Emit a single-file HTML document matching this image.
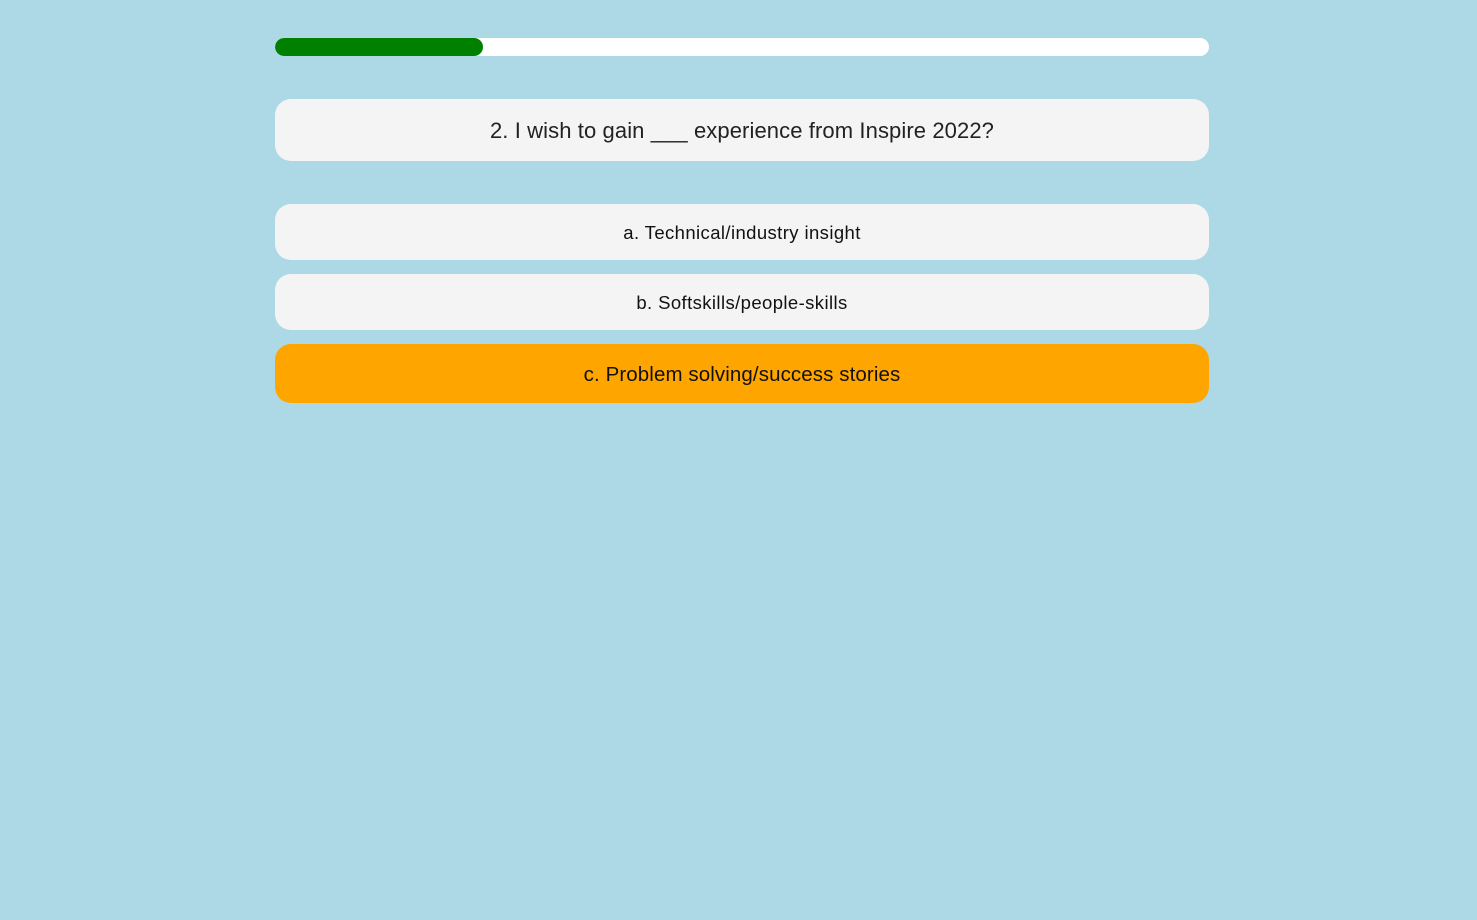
<!DOCTYPE html>
<html><head><style>
html,body{margin:0;padding:0;background:#add8e6;width:1477px;height:920px;overflow:hidden;font-family:"Liberation Sans","DejaVu Sans",sans-serif;}
.bar{position:absolute;left:275px;top:38px;width:934px;height:18px;background:#fff;border-radius:9px;overflow:hidden}
.fill{width:208px;height:18px;background:#008000;border-radius:9px}
.box{position:absolute;left:275px;width:934px;background:#f4f4f5;border-radius:16px;display:flex;align-items:center;justify-content:center;color:#111;padding-top:2px;box-sizing:border-box}
</style></head><body>
<div class="bar"><div class="fill"></div></div>
<div class="box" style="top:99px;height:62px;font-size:22px;color:#222;letter-spacing:0.1px">2. I wish to gain ___ experience from Inspire 2022?</div>
<div class="box" style="top:204px;height:56px;font-size:18.5px;letter-spacing:0.4px">a. Technical/industry insight</div>
<div class="box" style="top:274px;height:56px;font-size:18.5px;letter-spacing:0.4px">b. Softskills/people-skills</div>
<div class="box" style="top:344px;height:59px;font-size:20.5px;background:#ffa500;letter-spacing:0.1px">c. Problem solving/success stories</div>
</body></html>
